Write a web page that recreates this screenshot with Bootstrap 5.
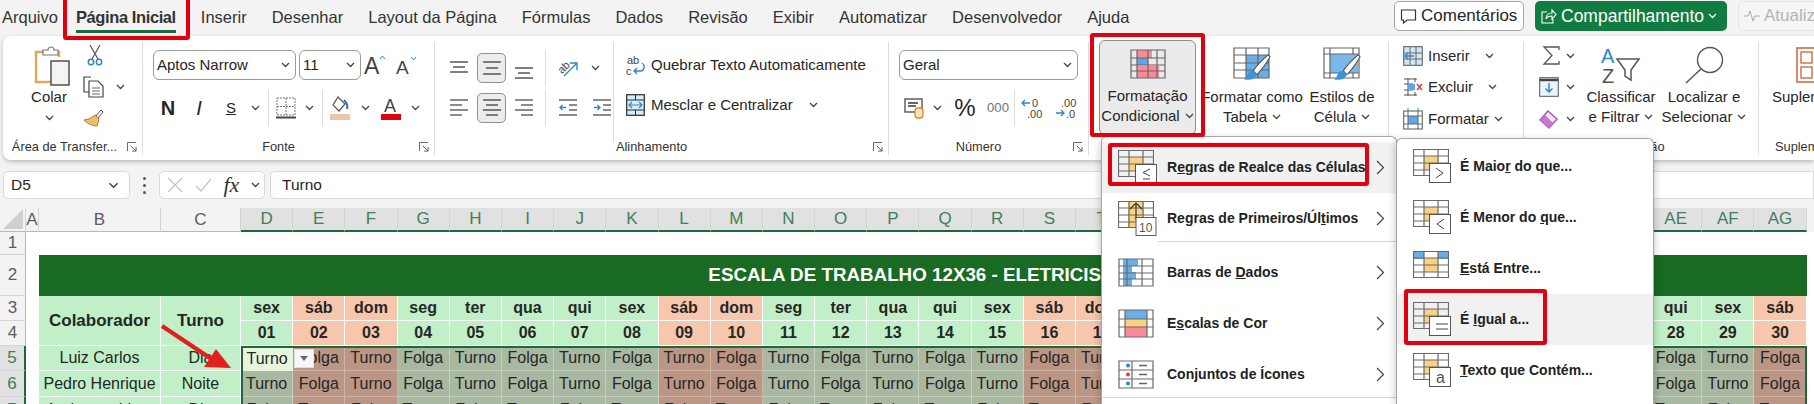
<!DOCTYPE html>
<html lang="pt-BR">
<head>
  <meta charset="UTF-8">
  <title>Escala de Trabalho 12x36</title>
  <link href="https://cdn.jsdelivr.net/npm/bootstrap@5.3.3/dist/css/bootstrap.min.css" rel="stylesheet">
  <script src="https://cdn.jsdelivr.net/npm/bootstrap@5.3.3/dist/js/bootstrap.bundle.min.js"></script>
  <style>
    html, body { height: 404px; overflow: hidden; }
    body { width: 1814px; position: relative; background: #f3f3f3; color: #262626; font-family: "Liberation Sans", Arial, sans-serif; font-size: 15px; }
    svg { display: block; flex: none; overflow: visible; }

    /* abas */
    .tabbar { height: 36px; padding-left: 2px; }
    .tabitem { font-size: 16.5px; line-height: 34px; margin-right: 25px; color: #333; white-space: nowrap; }
    .tabitem.ativa { font-weight: 700; position: relative; margin-left: -7px; letter-spacing: -.4px; }
    .tabitem.ativa::after { content: ""; position: absolute; left: 0; right: 0; top: 30px; height: 3px; background: #1a6b3c; }
    .acoes { position: absolute; top: 1px; left: 1394px; gap: 11px; font-size: 17px; }
    .btnx { height: 30px; border-radius: 5px; display: flex; align-items: center; gap: 4px; padding: 0 5px; white-space: nowrap; overflow: hidden; }
    .btn-coment { width: 130px; background: #fff; border: 1px solid #a8a8a8; }
    .btn-compart { width: 192px; background: #107c41; color: #fff; font-size: 17.5px; }
    .btn-atual { width: 100px; background: #f5f5f5; border: 1px solid #e6e6e6; color: #b4b4b4; }

    /* faixa de opcoes */
    .ribbon { height: 124px; margin-left: 3px; background: #fff; border-radius: 8px 0 0 8px; box-shadow: 0 2px 4px rgba(0,0,0,.22); padding-top: 6px; }
    .grp { height: 113px; border-right: 1px solid #dcdcdc; display: flex; flex-direction: column; flex: none; }
    .grp-body { flex: 1 1 auto; display: flex; min-height: 0; }
    .grp-label { height: 16px; line-height: 16px; font-size: 12.8px; display: flex; color: #333; white-space: nowrap; }
    .grp-label span { flex: 1 1 auto; text-align: center; }
    .launch { width: 20px; flex: none; display: flex; justify-content: center; align-items: center; }
    .g-clip { width: 140px; } .g-font { width: 292px; } .g-alin { width: 454px; } .g-num { width: 200px; }
    .g-est { width: 300px; } .g-cel { width: 135px; } .g-edi { width: 235px; } .g-sup { width: 60px; border-right: 0; overflow: hidden; }
    .linha { height: 30px; display: grid; align-items: center; justify-items: center; }
    .pilha { padding-top: 8px; display: flex; flex-direction: column; gap: 10px; }
    .combo { height: 30px; border: 1px solid #9a9a9a; border-radius: 6px; padding: 0 5px 0 3px; display: flex; align-items: center; justify-content: space-between; }
    .combo-num { width: 179px; }
    .ativo { width: 29px; height: 30px; background: #ececec; border: 1px solid #8f8f8f; border-radius: 5px; display: flex; align-items: center; justify-content: center; }
    .sepv { width: 1px; height: 36px; background: #dcdcdc; }
    .grande { flex: none; display: flex; flex-direction: column; align-items: center; text-align: center; line-height: 20px; white-space: nowrap; }
    .grande .topo { height: 45px; display: flex; align-items: center; justify-content: center; }
    .chev-in { display: inline-block; margin-left: 5px; vertical-align: 2px; }

    .clip-a { width: 80px; padding: 3px 0 0 12px; }
    .clip-a .topo { height: 42px; padding-left: 6px; }
    .clip-b { width: 58px; padding-top: 2px; gap: 10px; }
    .clip-copia { gap: 12px; }
    .font-area { padding-left: 10px; }
    .font-l1 { grid-template-columns: 143px 62px 29px 35px; column-gap: 3px; justify-items: start; }
    .font-l2 { grid-template-columns: 30px 32px 32px 16px 10px 26px 20px 6px 30px 20px 32px 16px; }
    .alin-a { width: 179px; padding-left: 8px; border-right: 1px solid #dcdcdc; height: 100px; }
    .alin-l1 { grid-template-columns: 32.5px 32.5px 32.5px 10px 35px 19px; }
    .alin-l2 { grid-template-columns: 32.5px 32.5px 32.5px 10px 35px 32px; }
    .alin-b { padding-left: 12px; }
    .alin-l { display: flex; align-items: center; height: 30px; white-space: nowrap; }
    .alin-ico { width: 25px; flex: none; }
    .num-area { padding-left: 10px; }
    .num-l2 { grid-template-columns: 30px 16px 40px 26px 6px 30px 4px 30px; }
    .est-cf { margin: -2px 6px 0 10px; width: 97px; height: 95px; background: #ebebeb; border: 1px solid #8f8f8f; border-radius: 6px; }
    .w-tab { width: 100px; } .w-est { width: 80px; }
    .cel-area { padding: 0 0 0 14px; margin-top: -2px; }
    .cel-l { height: 31.5px; display: flex; align-items: center; gap: 5px; white-space: nowrap; }
    .cel-l .chv { margin-left: 10px; }
    .edi-a { width: 58px; padding-left: 15px; margin-top: -2px; }
    .edi-l { height: 31.5px; display: flex; align-items: center; justify-content: space-between; padding-right: 7px; }
    .w-cla { width: 78px; } .w-loc { width: 88px; }
    .sup-area { padding-left: 13px; }

    /* barra de formula */
    .fbar { height: 28px; margin: 11px 0 9px 3px; gap: 5px; }
    .nomebox { width: 127px; background: #fff; border: 1px solid #d9d9d9; border-radius: 5px; padding: 0 10px 0 7px; font-size: 15.5px; }
    .pontos { width: 19px; }
    .ponto { width: 3px; height: 3px; background: #555; border-radius: 50%; }
    .fxbox { width: 106px; background: #fff; border: 1px solid #d9d9d9; border-radius: 5px; padding: 0 4px 0 7px; }
    .fxtxt { font-family: "Liberation Serif", serif; font-style: italic; font-size: 22px; line-height: 1; color: #333; }
    .forminput { flex: 1 1 auto; background: #fff; border: 1px solid #d9d9d9; border-radius: 5px 0 0 5px; padding-left: 11px; font-size: 15.5px; }

    /* planilha */
    .sheet { position: relative; display: grid; height: 196px; overflow: hidden; grid-template-columns: 26px 13px 122px 80px repeat(30, 52.2px) 1fr; grid-template-rows: 24px 23px 41px 25px 25px 25px 26px 26px; background: #fff; font-size: 16px; }
    .sheet > div { display: flex; align-items: center; justify-content: center; white-space: nowrap; min-width: 0; }
    .hcol { background: #f3f3f3; color: #5d5d5d; font-size: 17px; border-right: 1px solid #d4d4d4; border-bottom: 1px solid #b8b8b8; }
    .hcol.sel { background: #e1e1e1; color: #3f7f5a; border-bottom: 2px solid #1a6b3c; }
    .hcol.canto { justify-content: flex-end !important; align-items: flex-end !important; padding: 0 2px 2px 0; }
    .hcol.fim { border: 0; }
    .hrow { background: #f3f3f3; color: #5d5d5d; font-size: 17px; border-right: 1px solid #b8b8b8; border-bottom: 1px solid #d4d4d4; }
    .hrow.sel { background: #e1e1e1; color: #3f7f5a; border-right: 2px solid #1a6b3c; }
    .vazia-lin { grid-column: 2 / -1; }
    .titulo { grid-column: 3 / 35; background: #196b24; color: #fff; font-weight: 700; font-size: 18.8px; }
    .verde { background: #c1f0c8; border-right: 1px solid #fff; border-bottom: 1px solid #fff; }
    .laranja { background: #f6c6ad; border-right: 1px solid #fff; border-bottom: 1px solid #fff; }
    .negrito { font-weight: 700; }
    .cab { font-size: 17px; grid-row: span 2; }
    .util { background: #a9b9a1; border-right: 1px solid #c4d0bd; border-bottom: 1px solid #c4d0bd; }
    .fimsem { background: #bb9684; border-right: 1px solid #cfb3a5; border-bottom: 1px solid #cfb3a5; }
    .atual { background: #e7f5df; }
    .sheet > .selecao { position: absolute; inset: 0; grid-column: 5 / 35; grid-row: 6 / 9; border: 2px solid #1a6b3c; border-bottom: 0; z-index: 2; pointer-events: none; }
    .cellwrap { position: relative; }
    .dropcel { position: absolute; left: 1px; top: 3px; width: 20px; height: 19px; background: #f7f7fb; border: 1px solid #e0e0e0; display: flex; align-items: center; justify-content: center; }

    /* menus */
    .menu1, .menu2 { position: absolute; background: #fff; border: 1px solid #a6a6a6; border-bottom: 0; box-shadow: 0 3px 8px rgba(0,0,0,.25); z-index: 5; font-weight: 700; font-size: 14px; white-space: nowrap; }
    .menu1 { left: 1101px; top: 136px; width: 296px; height: 268px; border-radius: 6px 6px 0 0; padding-top: 5px; }
    .menu2 { left: 1396px; top: 138px; width: 258px; height: 266px; border-radius: 6px 6px 0 0; padding-top: 2px; z-index: 6; }
    .mitem { height: 51px; display: flex; align-items: center; padding-right: 11px; padding-left: 16px; }
    .mitem .mtxt { margin-left: 9px; flex: 1 1 auto; color: #222; }
    .menu2 .mitem .mtxt { margin-left: 7px; }
    .mitem.marcado { background: #f1f1f1; }
    .msep { height: 1px; background: #d4d4d4; margin: -3px 0 5px 56px; }
    .msep.toda { margin: -3px 0 0; }

    /* marcacoes vermelhas */
    .boxred { position: absolute; border: 4px solid #e2000f; border-radius: 3px; z-index: 9; pointer-events: none; }
    .r-tab { left: 63px; top: -4px; width: 127px; height: 44px; }
    .r-cf { left: 1090px; top: 33px; width: 115px; height: 104px; }
    .r-reg { left: 1108px; top: 143px; width: 261px; height: 43px; }
    .r-igual { left: 1404px; top: 289px; width: 143px; height: 56px; }
    .seta { position: absolute; left: 155px; top: 320px; z-index: 4; }
  </style>
</head>
<body>
  <svg width="0" height="0" class="position-absolute">
    <defs>
      <symbol id="chev" viewBox="0 0 9 6"><path d="M1 1l3.500 3.500L8 1" fill="none" stroke="#444" stroke-width="1.300"/></symbol>
      <symbol id="chevw" viewBox="0 0 9 6"><path d="M1 1l3.500 3.500L8 1" fill="none" stroke="#fff" stroke-width="1.300"/></symbol>
      <symbol id="seta-d" viewBox="0 0 9 15"><path d="M1 1l6.500 6.500L1 14" fill="none" stroke="#444" stroke-width="1.200"/></symbol>
      <symbol id="launch" viewBox="0 0 11 11"><path d="M.5 10V.5H10M4 4l6 6M10 5.500V10H5.500" fill="none" stroke="#555" stroke-width="1"/></symbol>
      <symbol id="gridmenu" viewBox="0 0 36 34">
        <rect x="11" y="7" width="14" height="14" fill="#fbd27f"/>
        <path d="M.5.5h35v26H.5zM.5 7h35M.5 14h35M.5 21h35M11 .5v26M25 .5v26" fill="none" stroke="#6b6b6b" stroke-width="1.200"/>
      </symbol>
      <symbol id="boxsm" viewBox="0 0 22 20"><rect x=".5" y=".5" width="21" height="19" fill="#fff" stroke="#555"/></symbol>
      <symbol id="brush" viewBox="0 0 30 30">
        <path d="M27 1C21 6 15 12 11 18l4 4C20 17 25 10 29 3z" fill="#fff" stroke="#555" stroke-width="1.200"/>
        <path d="M10 18c-4 0-5 4-6 6-.5 1.500-2 2-3 3 4 1.500 12 1 14-5z" fill="#3f93d6"/>
      </symbol>
    </defs>
  </svg>

  <div class="tabbar d-flex align-items-start">
    <div class="tabitem">Arquivo</div>
    <div class="tabitem ativa">Página Inicial</div>
    <div class="tabitem">Inserir</div>
    <div class="tabitem">Desenhar</div>
    <div class="tabitem">Layout da Página</div>
    <div class="tabitem">Fórmulas</div>
    <div class="tabitem">Dados</div>
    <div class="tabitem">Revisão</div>
    <div class="tabitem">Exibir</div>
    <div class="tabitem">Automatizar</div>
    <div class="tabitem">Desenvolvedor</div>
    <div class="tabitem">Ajuda</div>
  </div>
  <div class="acoes d-flex">
    <div class="btnx btn-coment">
      <svg width="17" height="17" viewBox="0 0 17 17"><path d="M1.500 2h14v10H7l-3.500 3v-3h-2z" fill="none" stroke="#333" stroke-width="1.200"/></svg>
      <span>Comentários</span>
    </div>
    <div class="btnx btn-compart">
      <svg width="17" height="17" viewBox="0 0 17 17"><path d="M7 4H2v11h11v-4M6 11c0-4 3-6 6-6V2l4 4.500L12 11V8c-3 0-5 1-6 3z" fill="none" stroke="#fff" stroke-width="1.100"/></svg>
      <span>Compartilhamento</span>
      <svg width="9" height="6"><use href="#chevw"/></svg>
    </div>
    <div class="btnx btn-atual">
      <svg width="16" height="12" viewBox="0 0 16 12"><path d="M0 6h4l2-5 3 10 2-5h5" fill="none" stroke="#aaa"/></svg>
      <span>Atualizar</span>
    </div>
  </div>

  <div class="ribbon d-flex">
    <div class="grp g-clip">
      <div class="grp-body">
        <div class="clip-a grande">
          <div class="topo">
            <svg width="36" height="38" viewBox="0 0 36 38">
              <path d="M24 5h1v5M10 5H2v30h16" fill="none" stroke="#e3a857" stroke-width="2.400"/>
              <path d="M9 3h5a3 3 0 0 1 6 0h4v5H9z" fill="#fff" stroke="#777" stroke-width="1.200"/>
              <rect x="17" y="14" width="18" height="24" fill="#f4f4f4" stroke="#444" stroke-width="1.400"/>
            </svg>
          </div>
          <div>Colar</div>
          <svg width="9" height="6" class="mt-2"><use href="#chev"/></svg>
        </div>
        <div class="clip-b d-flex flex-column">
          <svg width="16" height="22" viewBox="0 0 16 22" class="ms-1"><path d="M3 1l8 14M13 1L5 15" stroke="#555" stroke-width="1.200"/><circle cx="4" cy="18" r="2.700" fill="none" stroke="#2f86c5" stroke-width="1.500"/><circle cx="12" cy="18" r="2.700" fill="none" stroke="#2f86c5" stroke-width="1.500"/></svg>
          <div class="d-flex align-items-center clip-copia">
            <svg width="21" height="22" viewBox="0 0 21 22"><path d="M8 1H1v15h5" fill="none" stroke="#444" stroke-width="1.200"/><path d="M6 5h9l5 5v11H6z" fill="#fff" stroke="#444" stroke-width="1.200"/><path d="M9 12h8M9 15h8M9 18h8" stroke="#666"/></svg>
            <svg width="9" height="6"><use href="#chev"/></svg>
          </div>
          <svg width="21" height="20" viewBox="0 0 21 20"><path d="M13 8l5-6 2 2-5 6z" fill="#fff" stroke="#555"/><path d="M12 7l4 4-2 7c-4 0-9-2-13-6l5-1z" fill="#f3bb70" stroke="#b97a2b"/></svg>
        </div>
      </div>
      <div class="grp-label ps-1"><span>Área de Transfer...</span><div class="launch"><svg width="10" height="10"><use href="#launch"/></svg></div></div>
    </div>

    <div class="grp g-font">
      <div class="grp-body">
        <div class="pilha font-area">
          <div class="linha font-l1">
            <div class="combo w-100"><span>Aptos Narrow</span><svg width="9" height="6"><use href="#chev"/></svg></div>
            <div class="combo w-100"><span>11</span><svg width="9" height="6"><use href="#chev"/></svg></div>
            <svg width="22" height="22" viewBox="0 0 22 22"><text x="0" y="20" font-size="23" fill="#444" font-family="Liberation Sans">A</text><path d="M16 5l2.500-3 2.500 3" fill="none" stroke="#2f86c5"/></svg>
            <svg width="22" height="20" viewBox="0 0 22 20"><text x="0" y="19" font-size="19" fill="#444" font-family="Liberation Sans">A</text><path d="M15 2l2.500 3 2.500-3" fill="none" stroke="#2f86c5"/></svg>
          </div>
          <div class="linha font-l2">
            <span class="negrito fs-5">N</span>
            <span class="fst-italic fs-5 fw-light">I</span>
            <span class="text-decoration-underline">S</span>
            <svg width="9" height="6"><use href="#chev"/></svg>
            <div class="sepv"></div>
            <svg width="20" height="22" viewBox="0 0 20 22"><path d="M1 1h18v17H1zM10 1v17M1 9.500h18" fill="none" stroke="#777" stroke-dasharray="2 1"/><path d="M0 20.500h20" stroke="#444" stroke-width="2"/></svg>
            <svg width="9" height="6"><use href="#chev"/></svg>
            <div class="sepv"></div>
            <svg width="20" height="24" viewBox="0 0 20 24"><path d="M8 1l7 7-6 7-6-6z" fill="#fff" stroke="#555" stroke-width="1.200"/><path d="M14 4c3 3 4 6 3 9" stroke="#2f6fb0" stroke-width="2" fill="none"/><rect y="18" width="20" height="6" fill="#f0c4a8"/></svg>
            <svg width="9" height="6"><use href="#chev"/></svg>
            <svg width="20" height="24" viewBox="0 0 20 24"><text x="3" y="16" font-size="18" fill="#444" font-family="Liberation Sans">A</text><rect y="18" width="20" height="6" fill="#e2000f"/></svg>
            <svg width="9" height="6"><use href="#chev"/></svg>
          </div>
        </div>
      </div>
      <div class="grp-label"><span>Fonte</span><div class="launch"><svg width="10" height="10"><use href="#launch"/></svg></div></div>
    </div>

    <div class="grp g-alin">
      <div class="grp-body">
        <div class="pilha alin-a">
          <div class="linha alin-l1">
            <svg width="18" height="14" viewBox="0 0 18 14"><path d="M0 1h18M3 6h12M0 11h18" stroke="#555" stroke-width="1.500"/></svg>
            <div class="ativo"><svg width="18" height="14" viewBox="0 0 18 14"><path d="M0 1h18M3 7h12M0 13h18" stroke="#555" stroke-width="1.500"/></svg></div>
            <svg width="18" height="14" viewBox="0 0 18 14" class="mt-2"><path d="M0 3h18M3 8h12M0 13h18" stroke="#555" stroke-width="1.500"/></svg>
            <div class="sepv"></div>
            <svg width="20" height="20" viewBox="0 0 20 20"><text x="0" y="13" font-size="11" fill="#444" transform="rotate(-45 6 10)" font-family="Liberation Sans">ab</text><path d="M6 18L18 6M12 5h7v7" fill="none" stroke="#2f86c5" stroke-width="1.400"/></svg>
            <svg width="9" height="6"><use href="#chev"/></svg>
          </div>
          <div class="linha alin-l2">
            <svg width="18" height="20" viewBox="0 0 18 20"><path d="M0 2h18M0 7h12M0 12h18M0 17h12" stroke="#666" stroke-width="1.500"/></svg>
            <div class="ativo"><svg width="18" height="20" viewBox="0 0 18 20"><path d="M0 2h18M3 7h12M0 12h18M3 17h12" stroke="#555" stroke-width="1.500"/></svg></div>
            <svg width="18" height="20" viewBox="0 0 18 20"><path d="M0 2h18M6 7h12M0 12h18M6 17h12" stroke="#666" stroke-width="1.500"/></svg>
            <div class="sepv"></div>
            <svg width="18" height="20" viewBox="0 0 18 20"><path d="M0 2h18M10 7h8M10 12h8M0 17h18" stroke="#666" stroke-width="1.500"/><path d="M7 9.500H1M3.500 7L1 9.500 3.500 12" fill="none" stroke="#2f86c5" stroke-width="1.300"/></svg>
            <svg width="18" height="20" viewBox="0 0 18 20"><path d="M0 2h18M10 7h8M10 12h8M0 17h18" stroke="#666" stroke-width="1.500"/><path d="M1 9.500h6M4.500 7L7 9.500 4.500 12" fill="none" stroke="#2f86c5" stroke-width="1.300"/></svg>
          </div>
        </div>
        <div class="pilha alin-b">
          <div class="alin-l">
            <div class="alin-ico"><svg width="20" height="22" viewBox="0 0 20 22"><text x="1" y="10" font-size="11" fill="#444" font-family="Liberation Sans">ab</text><text x="0" y="21" font-size="11" fill="#444" font-family="Liberation Sans">c</text><path d="M16 9c3 2 3 7-1 8H8M11 14l-3 3 3 3" fill="none" stroke="#2f86c5" stroke-width="1.300"/></svg></div>
            <span>Quebrar Texto Automaticamente</span>
          </div>
          <div class="alin-l">
            <div class="alin-ico"><svg width="19" height="22" viewBox="0 0 19 22"><rect x=".7" y=".7" width="17.600" height="20.600" fill="#d6ecf9" stroke="#2a2a2a" stroke-width="1.200"/><path d="M1 6h17M1 16h17M9.500 1v5M9.500 16v5" stroke="#2a2a2a"/><path d="M3 11h13M6 8l-3 3 3 3M13 8l3 3-3 3" fill="none" stroke="#2f86c5" stroke-width="1.200"/></svg></div>
            <span>Mesclar e Centralizar</span>
            <svg width="9" height="6" class="ms-3"><use href="#chev"/></svg>
          </div>
        </div>
      </div>
      <div class="grp-label"><span>Alinhamento</span><div class="launch"><svg width="10" height="10"><use href="#launch"/></svg></div></div>
    </div>

    <div class="grp g-num">
      <div class="grp-body">
        <div class="pilha num-area">
          <div class="combo combo-num"><span>Geral</span><svg width="9" height="6"><use href="#chev"/></svg></div>
          <div class="linha num-l2">
            <svg width="20" height="22" viewBox="0 0 20 22"><rect x="1" y="2" width="17" height="13" fill="#fff" stroke="#555" stroke-width="1.400"/><path d="M4 6h10M4 9h8" stroke="#666" stroke-width="2"/><rect x="11" y="11" width="8" height="10" rx="3" fill="#fbe3c0" stroke="#d98a2a" stroke-width="1.300"/></svg>
            <svg width="9" height="6"><use href="#chev"/></svg>
            <span class="fs-4 lh-1 fw-light">%</span>
            <span class="small text-secondary">000</span>
            <div class="sepv"></div>
            <svg width="22" height="22" viewBox="0 0 22 22"><path d="M9 6H1M4 3L1 6l3 3" fill="none" stroke="#2f86c5" stroke-width="1.300"/><text x="11" y="10" font-size="11" fill="#444" font-family="Liberation Sans">0</text><text x="6" y="21" font-size="11" fill="#444" font-family="Liberation Sans">.00</text></svg>
            <span></span>
            <svg width="22" height="22" viewBox="0 0 22 22"><text x="6" y="10" font-size="11" fill="#444" font-family="Liberation Sans">.00</text><path d="M1 16h8M6 13l3 3-3 3" fill="none" stroke="#2f86c5" stroke-width="1.300"/><text x="11" y="21" font-size="11" fill="#444" font-family="Liberation Sans">.0</text></svg>
          </div>
        </div>
      </div>
      <div class="grp-label"><span>Número</span><div class="launch"><svg width="10" height="10"><use href="#launch"/></svg></div></div>
    </div>

    <div class="grp g-est">
      <div class="grp-body">
        <div class="grande est-cf">
          <div class="topo">
            <svg width="36" height="30" viewBox="0 0 36 30">
              <rect x="7" y="1" width="15" height="8" fill="#f98a96"/><rect x="7" y="9" width="11" height="7" fill="#5da7e8"/><rect x="7" y="17" width="22" height="12" fill="#f98a96"/>
              <path d="M1 1h34v28H1zM1 9h34M1 16h34M1 22h34M7 1v28M18 1v28M27 1v28" fill="none" stroke="#666" stroke-width="1.200"/>
            </svg>
          </div>
          <div>Formatação</div>
          <div>Condicional<svg width="9" height="6" class="chev-in"><use href="#chev"/></svg></div>
        </div>
        <div class="grande w-tab">
          <div class="topo">
            <svg width="38" height="36" viewBox="0 0 38 36">
              <rect x="13" y="8" width="23" height="23" fill="#6aaee8"/>
              <path d="M1 1h35v30H1zM1 8h35M1 16h35M1 23h35M13 1v30M25 1v30" fill="none" stroke="#666" stroke-width="1.200"/>
              <use href="#brush" x="10" y="7" width="28" height="28"/>
            </svg>
          </div>
          <div>Formatar como</div>
          <div>Tabela<svg width="9" height="6" class="chev-in"><use href="#chev"/></svg></div>
        </div>
        <div class="grande w-est">
          <div class="topo">
            <svg width="38" height="36" viewBox="0 0 38 36">
              <rect x="7" y="7" width="28" height="19" fill="#7ab7ec"/>
              <path d="M1 1h35v30H1zM1 7h35M1 26h35M7 1v30M30 1v6M30 26v5" fill="none" stroke="#666" stroke-width="1.200"/>
              <use href="#brush" x="10" y="7" width="28" height="28"/>
            </svg>
          </div>
          <div>Estilos de</div>
          <div>Célula<svg width="9" height="6" class="chev-in"><use href="#chev"/></svg></div>
        </div>
      </div>
    </div>

    <div class="grp g-cel">
      <div class="grp-body">
        <div class="cel-area">
          <div class="cel-l">
            <svg width="20" height="20" viewBox="0 0 20 20"><rect x=".7" y=".7" width="18.600" height="18.600" fill="#cfe6f7" stroke="#555"/><path d="M1 7h18M1 13h18M7 1v18M13 1v18" stroke="#666"/><path d="M11 10H2M5 7l-3 3 3 3" fill="none" stroke="#2f86c5" stroke-width="1.400"/></svg>
            <span>Inserir</span><svg width="9" height="6" class="chv"><use href="#chev"/></svg>
          </div>
          <div class="cel-l">
            <svg width="20" height="20" viewBox="0 0 20 20"><path d="M1 2h13M1 7h9M1 13h9M1 18h13M5 1v18M12 1v4M12 15v4" stroke="#555" fill="none"/><rect x="5" y="7" width="7" height="6" fill="#5da7e8"/><path d="M14 7l5 6M19 7l-5 6" stroke="#d94040" stroke-width="1.500"/></svg>
            <span>Excluir</span><svg width="9" height="6" class="chv"><use href="#chev"/></svg>
          </div>
          <div class="cel-l">
            <svg width="20" height="22" viewBox="0 0 20 22"><rect x=".7" y="3" width="18.600" height="18" fill="#fff" stroke="#555"/><rect x="5" y="8" width="10" height="8" fill="#5da7e8"/><path d="M1 8h18M1 16h18M5 3v18M15 3v18" stroke="#666"/><path d="M5 0v3M15 0v3" stroke="#2f86c5"/></svg>
            <span>Formatar</span><svg width="9" height="6"><use href="#chev"/></svg>
          </div>
        </div>
      </div>
    </div>

    <div class="grp g-edi">
      <div class="grp-body">
        <div class="edi-a">
          <div class="edi-l ps-1">
            <svg width="17" height="19" viewBox="0 0 17 19"><path d="M16 4V1H1l8 8.500L1 18h15v-3" fill="none" stroke="#555" stroke-width="1.300"/></svg>
            <svg width="9" height="6"><use href="#chev"/></svg>
          </div>
          <div class="edi-l">
            <svg width="20" height="20" viewBox="0 0 20 20"><rect x=".7" y=".7" width="18.600" height="18.600" fill="#eaf4fb" stroke="#555"/><path d="M1 3h18" stroke="#444" stroke-width="2.500"/><path d="M10 6v9M6.500 11.500L10 15l3.500-3.500" fill="none" stroke="#2f86c5" stroke-width="1.400"/></svg>
            <svg width="9" height="6"><use href="#chev"/></svg>
          </div>
          <div class="edi-l">
            <svg width="20" height="20" viewBox="0 0 20 20"><path d="M1 11l8-9 9 8-8 9z" fill="#f4e6f5" stroke="#a74fb0" stroke-width="1.300"/><path d="M1 11l5-5 8 8-4 5z" fill="#c877ca"/></svg>
            <svg width="9" height="6"><use href="#chev"/></svg>
          </div>
        </div>
        <div class="grande w-cla">
          <div class="topo">
            <svg width="40" height="38" viewBox="0 0 40 38">
              <text x="0" y="17" font-size="20" fill="#2f86c5" font-family="Liberation Sans">A</text>
              <text x="1" y="37" font-size="20" fill="#555" font-family="Liberation Sans">Z</text>
              <path d="M16 13h22l-8 11v10l-6-4v-6z" fill="#fff" stroke="#555" stroke-width="1.500"/>
            </svg>
          </div>
          <div>Classificar</div>
          <div>e Filtrar<svg width="9" height="6" class="chev-in"><use href="#chev"/></svg></div>
        </div>
        <div class="grande w-loc">
          <div class="topo">
            <svg width="38" height="38" viewBox="0 0 38 38"><circle cx="25" cy="14" r="12.500" fill="#fff" stroke="#555" stroke-width="1.400"/><path d="M16 23L1 37" stroke="#555" stroke-width="1.400"/></svg>
          </div>
          <div>Localizar e</div>
          <div>Selecionar<svg width="9" height="6" class="chev-in"><use href="#chev"/></svg></div>
        </div>
      </div>
      <div class="grp-label"><span class="ps-2">Edição</span></div>
    </div>

    <div class="grp g-sup">
      <div class="grp-body">
        <div class="grande sup-area align-items-start">
          <div class="topo ps-4">
            <svg width="36" height="36" viewBox="0 0 36 36"><rect x="1" y="1" width="34" height="34" fill="none" stroke="#cc6d45" stroke-width="1.600"/><rect x="5" y="5" width="11" height="11" fill="none" stroke="#cc6d45" stroke-width="1.400"/><rect x="20" y="5" width="11" height="11" fill="none" stroke="#cc6d45" stroke-width="1.400"/><rect x="5" y="20" width="11" height="11" fill="none" stroke="#cc6d45" stroke-width="1.400"/><rect x="20" y="20" width="11" height="11" fill="none" stroke="#cc6d45" stroke-width="1.400"/></svg>
          </div>
          <div>Suplementos</div>
        </div>
      </div>
      <div class="grp-label ps-3">Suplementos</div>
    </div>
  </div>

  <div class="fbar d-flex">
    <div class="nomebox d-flex align-items-center justify-content-between"><span>D5</span><svg width="11" height="7"><use href="#chev"/></svg></div>
    <div class="pontos d-flex flex-column align-items-center justify-content-center gap-1">
      <span class="ponto"></span><span class="ponto"></span><span class="ponto"></span>
    </div>
    <div class="fxbox d-flex align-items-center justify-content-between">
      <svg width="16" height="16" viewBox="0 0 16 16"><path d="M1 1l14 14M15 1L1 15" stroke="#c4c4c4" stroke-width="1.300"/></svg>
      <svg width="17" height="14" viewBox="0 0 17 14"><path d="M1 8l5 5L16 1" fill="none" stroke="#c4c4c4" stroke-width="1.300"/></svg>
      <span class="fxtxt">fx</span>
      <svg width="9" height="6"><use href="#chev"/></svg>
    </div>
    <div class="forminput d-flex align-items-center">Turno</div>
  </div>

  <div id="planilha" class="sheet"></div>

  <svg class="seta" width="82" height="54" viewBox="0 0 82 54">
    <path d="M7 6l54 36" stroke="#e2201c" stroke-width="4.500"/>
    <path d="M76 48L49 47 61 29z" fill="#e2201c"/>
  </svg>

  <div class="menu1">
    <div class="mitem marcado">
      <svg width="40" height="36" viewBox="0 0 40 36"><use href="#gridmenu" width="36" height="34"/><use href="#boxsm" x="17" y="14" width="22" height="20"/><path d="M32 19l-7 3.500 7 3.500M25 29h7" fill="none" stroke="#444"/></svg>
      <span class="mtxt">R<u>e</u>gras de Realce das Células</span>
      <svg width="9" height="15"><use href="#seta-d"/></svg>
    </div>
    <div class="mitem">
      <svg width="40" height="36" viewBox="0 0 40 36"><rect x="10" y="1" width="16" height="26" fill="#fbd27f"/><use href="#gridmenu" width="36" height="34"/><path d="M18 2v17M12 8l6-6 6 6" fill="none" stroke="#333" stroke-width="1.200"/><use href="#boxsm" x="17" y="16" width="22" height="19"/><text x="21" y="31" font-size="12" font-weight="400" fill="#555" font-family="Liberation Sans">10</text></svg>
      <span class="mtxt">Regras de Primeiros/Úl<u>t</u>imos</span>
      <svg width="9" height="15"><use href="#seta-d"/></svg>
    </div>
    <div class="msep"></div>
    <div class="mitem">
      <svg width="40" height="30" viewBox="0 0 40 30"><path d="M9 1h11v7h-6v6h4v7h-4v7H5V1z" fill="#6aaee8"/><path d="M1 1h34v27H1zM1 8h34M1 15h34M1 21h34M9 1v27M24 1v27" fill="none" stroke="#6b6b6b" stroke-width="1.200"/></svg>
      <span class="mtxt">Barras de <u>D</u>ados</span>
      <svg width="9" height="15"><use href="#seta-d"/></svg>
    </div>
    <div class="mitem">
      <svg width="40" height="30" viewBox="0 0 40 30"><rect x="7" y="1" width="22" height="9" fill="#6aaee8"/><rect x="7" y="10" width="22" height="8" fill="#fbd27f"/><rect x="7" y="18" width="22" height="10" fill="#f98a96"/><path d="M1 1h34v27H1zM1 10h34M1 18h34M7 1v27M29 1v27" fill="none" stroke="#6b6b6b" stroke-width="1.200"/></svg>
      <span class="mtxt">E<u>s</u>calas de Cor</span>
      <svg width="9" height="15"><use href="#seta-d"/></svg>
    </div>
    <div class="mitem">
      <svg width="40" height="30" viewBox="0 0 40 30"><path d="M1 1h34v27H1zM1 10h34M1 19h34M14 1v27" fill="none" stroke="#6b6b6b" stroke-width="1.200"/><circle cx="10" cy="5.500" r="2" fill="#2f86c5"/><circle cx="10" cy="14.500" r="2" fill="#d94040"/><circle cx="10" cy="23.500" r="2" fill="#2f86c5"/><path d="M21 5.500h8M21 14.500h8M21 23.500h8" stroke="#666" stroke-width="1.300"/></svg>
      <span class="mtxt">Conjuntos de Ícones</span>
      <svg width="9" height="15"><use href="#seta-d"/></svg>
    </div>
    <div class="msep toda"></div>
  </div>

  <div class="menu2">
    <div class="mitem">
      <svg width="40" height="36" viewBox="0 0 40 36"><use href="#gridmenu" width="36" height="34"/><use href="#boxsm" x="16" y="14" width="22" height="20"/><path d="M23 19l7 5-7 5" fill="none" stroke="#444"/></svg>
      <span class="mtxt">É Maio<u>r</u> do que...</span>
    </div>
    <div class="mitem">
      <svg width="40" height="36" viewBox="0 0 40 36"><use href="#gridmenu" width="36" height="34"/><use href="#boxsm" x="16" y="14" width="22" height="20"/><path d="M31 19l-7 5 7 5" fill="none" stroke="#444"/></svg>
      <span class="mtxt">É Menor do <u>q</u>ue...</span>
    </div>
    <div class="mitem">
      <svg width="40" height="36" viewBox="0 0 40 36"><rect y="0" width="11" height="8" fill="#6aaee8"/><rect x="25" y="0" width="11" height="8" fill="#6aaee8"/><use href="#gridmenu" width="36" height="34"/></svg>
      <span class="mtxt"><u>E</u>stá Entre...</span>
    </div>
    <div class="mitem marcado">
      <svg width="40" height="36" viewBox="0 0 40 36"><use href="#gridmenu" width="36" height="34"/><use href="#boxsm" x="16" y="14" width="22" height="20"/><path d="M23 22h12M23 27h12" fill="none" stroke="#444"/></svg>
      <span class="mtxt">É <u>I</u>gual a...</span>
    </div>
    <div class="mitem">
      <svg width="40" height="36" viewBox="0 0 40 36"><use href="#gridmenu" width="36" height="34"/><use href="#boxsm" x="16" y="14" width="22" height="20"/><text x="23" y="30" font-size="16" font-weight="400" fill="#555" font-family="Liberation Sans">a</text></svg>
      <span class="mtxt"><u>T</u>exto que Contém...</span>
    </div>
  </div>

  <div class="boxred r-tab"></div>
  <div class="boxred r-cf"></div>
  <div class="boxred r-reg"></div>
  <div class="boxred r-igual"></div>

  <script>
    // monta a planilha: cabecalhos, titulo e escala dos 30 dias
    const letras = ['D','E','F','G','H','I','J','K','L','M','N','O','P','Q','R','S','T','U','V','W','X','Y','Z','AA','AB','AC','AD','AE','AF','AG'];
    const semana = ['sex','sáb','dom','seg','ter','qua','qui'];
    const nomes = [['Luiz Carlos','Dia'],['Pedro Henrique','Noite'],['Anderson Lima','Dia']];
    const fimDeSemana = d => semana[d % 7] == 'sáb' || semana[d % 7] == 'dom';
    let html = '<div class="hcol canto"><svg width="20" height="20" viewBox="0 0 20 20"><path d="M20 0v20H0z" fill="#d0d0d0"/></svg></div>';

    ['A','B','C'].forEach(l => { html += `<div class="hcol">${l}</div>`; });
    letras.forEach(l => { html += `<div class="hcol sel">${l}</div>`; });
    html += '<div class="hcol fim"></div>';

    html += '<div class="hrow">1</div><div class="vazia-lin"></div>';
    html += '<div class="hrow">2</div><div></div><div class="titulo">ESCALA DE TRABALHO 12X36 - ELETRICISTAS</div><div></div>';

    html += '<div class="hrow">3</div><div></div>';
    html += '<div class="verde negrito cab">Colaborador</div><div class="verde negrito cab">Turno</div>';
    for (let d = 0; d < 30; d++) {
      html += `<div class="${fimDeSemana(d) ? 'laranja' : 'verde'} negrito">${semana[d % 7]}</div>`;
    }
    html += '<div></div><div class="hrow">4</div><div></div>';
    for (let d = 0; d < 30; d++) {
      html += `<div class="${fimDeSemana(d) ? 'laranja' : 'verde'} negrito">${String(d + 1).padStart(2, '0')}</div>`;
    }
    html += '<div></div>';

    nomes.forEach((n, i) => {
      html += `<div class="hrow sel">${5 + i}</div><div></div><div class="verde">${n[0]}</div><div class="verde">${n[1]}</div>`;
      for (let d = 0; d < 30; d++) {
        const turno = i == 2 ? d % 2 == 1 : d % 2 == 0;
        let cls = fimDeSemana(d) ? 'fimsem' : 'util';
        if (i == 0 && d == 0) cls = 'atual';
        if (i == 0 && d == 1) {
          html += `<div class="${cls} cellwrap">${turno ? 'Turno' : 'Folga'}<span class="dropcel"><svg width="8" height="5" viewBox="0 0 8 5"><path d="M0 0h8L4 5z" fill="#666"/></svg></span></div>`;
        } else {
          html += `<div class="${cls}">${turno ? 'Turno' : 'Folga'}</div>`;
        }
      }
      html += '<div></div>';
    });
    html += '<div class="selecao"></div>';
    document.getElementById('planilha').innerHTML = html;
  </script>
</body>
</html>
